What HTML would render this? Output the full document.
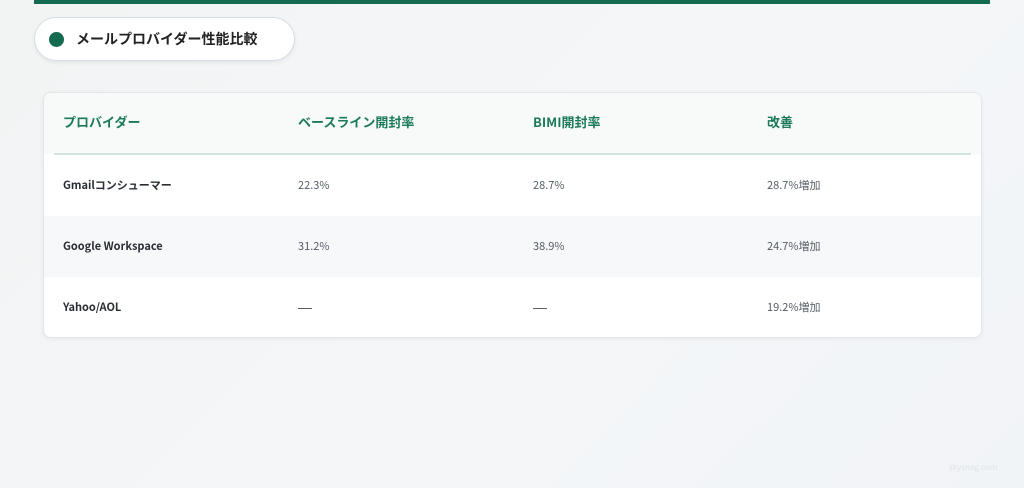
<!DOCTYPE html><html><head><meta charset="utf-8"><style>
body{margin:0;width:1024px;height:488px;background:linear-gradient(135deg,#f2f4f4,#f4f6f8 60%,#f1f4f7);font-family:"Noto Sans CJK JP","Liberation Sans",sans-serif;position:relative;overflow:hidden}
.bar{position:absolute;left:34px;top:0;width:956px;height:4px;background:#156b52}
.pill{position:absolute;left:34px;top:17px;width:259px;height:42px;border:1px solid #d5dbe4;border-radius:22px;background:#fff;box-shadow:0 2px 4px rgba(0,0,0,.06)}
.dot{position:absolute;left:14px;top:14px;width:15px;height:15px;border-radius:50%;background:#156b52}
.pill span{position:absolute;left:41px;top:0;line-height:42px;font-size:14px;font-weight:bold;color:#222}
.card{position:absolute;left:43px;top:92px;width:937px;height:244px;border:1px solid #e3e7ec;border-radius:8px;background:#fff;box-shadow:0 1px 4px rgba(0,0,0,.06);overflow:hidden}
.hd{position:absolute;left:0;top:0;width:100%;height:61px;background:#f8faf9}
.line{position:absolute;left:10px;top:60px;width:917px;height:2px;background:#d2e4dc}
.r{position:absolute;left:0;width:100%;height:61px}
.c{position:absolute;top:0;line-height:61px;font-size:11px;color:#555c66;white-space:nowrap}
.h{font-size:13px;font-weight:bold;color:#1b7a5a;top:-2px}
.b{font-weight:bold;color:#2a2f36}
.d{display:inline-block;width:14px;height:1px;background:#555c66;vertical-align:middle}
.wm{position:absolute;left:949px;top:462px;font-size:8px;color:#e0e3e6}
</style></head><body>
<div class="bar"></div>
<div class="pill"><div class="dot"></div><span>メールプロバイダー性能比較</span></div>
<div class="card">
<div class="hd"><div class="c h" style="left:19px">プロバイダー</div><div class="c h" style="left:254px">ベースライン開封率</div><div class="c h" style="left:489px">BIMI開封率</div><div class="c h" style="left:723px">改善</div></div>
<div class="line"></div>
<div class="r" style="top:62px"><div class="c b" style="left:19px">Gmailコンシューマー</div><div class="c" style="left:254px">22.3%</div><div class="c" style="left:489px">28.7%</div><div class="c" style="left:723px">28.7%増加</div></div>
<div class="r" style="top:123px;background:#f7f8fa"><div class="c b" style="left:19px">Google Workspace</div><div class="c" style="left:254px">31.2%</div><div class="c" style="left:489px">38.9%</div><div class="c" style="left:723px">24.7%増加</div></div>
<div class="r" style="top:184px"><div class="c b" style="left:19px">Yahoo/AOL</div><div class="c" style="left:254px"><span class="d"></span></div><div class="c" style="left:489px"><span class="d"></span></div><div class="c" style="left:723px">19.2%増加</div></div>
</div>
<div class="wm">skysnag.com</div>
</body></html>
